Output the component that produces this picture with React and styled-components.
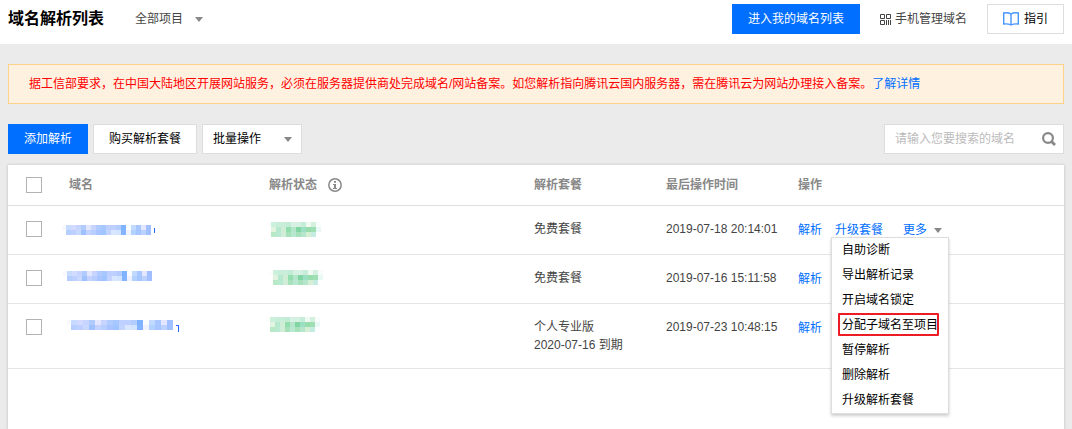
import React, { useState } from 'react';
import styled, { createGlobalStyle } from 'styled-components';

// Styling
const GlobalStyle = createGlobalStyle`
    * {
        box-sizing: border-box;
    }
    body {
        margin: 0;
        background: #ebebeb;
        color: #444;
        font: 12px/18px 'Liberation Sans', 'Noto Sans CJK SC', sans-serif;
    }
    button, input, select {
        font: inherit;
        border-radius: 0;
    }
`;

const Page = styled.div`
    display: flex;
    flex-direction: column;
    min-height: 100vh;
`;

const Header = styled.header`
    display: flex;
    align-items: center;
    justify-content: space-between;
    height: 44px;
    padding: 0 8px 6px;
    background: #fff;
`;

const HeaderGroup = styled.div`
    display: flex;
    align-items: center;
    gap: ${props => props.$gap};
`;

const Title = styled.h1`
    margin: 0;
    color: #000;
    font-size: 16px;
    line-height: 24px;
    font-weight: bold;
`;

const Main = styled.main`
    display: flex;
    flex-direction: column;
    flex: 1;
    padding: 20px 8px 0;
`;

const Button = styled.button`
    display: inline-flex;
    align-items: center;
    gap: 5px;
    height: 30px;
    padding: 0 15px;
    border: 1px solid ${props => props.$primary ? '#006eff' : '#ddd'};
    background: ${props => props.$primary ? '#006eff' : '#fff'};
    color: ${props => props.$primary ? '#fff' : '#000'};
    white-space: nowrap;
    cursor: pointer;
`;

const Link = styled.a`
    color: #006eff;
    text-decoration: none;
`;

const PhoneLink = styled(Link)`
    display: flex;
    align-items: center;
    gap: 4px;
    color: #444;
`;

const SelectWrapper = styled.div`
    display: grid;
    align-items: center;
    height: 30px;
    border: ${props => props.$bordered ? '1px solid #ddd' : 'none'};
    background: #fff;

    > * {
        grid-area: 1 / 1;
    }
    > svg {
        justify-self: end;
        margin-right: ${props => props.$bordered ? '9px' : '0'};
        pointer-events: none;
    }
`;

const Select = styled.select`
    appearance: none;
    width: ${props => props.$width};
    height: 28px;
    padding: 0 ${props => props.$inset};
    border: none;
    background: transparent;
    color: ${props => props.$inset === '0' ? '#444' : '#000'};
`;

const Notice = styled.div`
    padding: 10px 20px;
    border: 1px solid #ffd18b;
    background: #fff1e0;
    color: #f00;
`;

const Toolbar = styled.div`
    display: flex;
    gap: 5px;
    margin: 20px 0 10px;
`;

const SearchBox = styled.form`
    display: flex;
    align-items: center;
    width: 180px;
    height: 30px;
    margin-left: auto;
    padding: 0 7px 0 10px;
    border: 1px solid #ddd;
    background: #fff;
`;

const SearchInput = styled.input`
    flex: 1;
    min-width: 0;
    padding: 0;
    border: none;
    outline: none;
    background: transparent;

    &::placeholder {
        color: #bbb;
    }
`;

const IconButton = styled.button`
    display: flex;
    padding: 0;
    border: none;
    background: none;
`;

const Card = styled.section`
    flex: 1;
    border-top: 1px solid #ddd;
    background: #fff;
    box-shadow: 0 1px 3px rgba(0, 0, 0, 0.2);
`;

const Table = styled.table`
    width: 100%;
    table-layout: fixed;
    border-spacing: 0;
`;

const HeadCell = styled.th`
    width: ${props => props.$width};
    height: 41px;
    padding: 0 10px;
    border-bottom: 1px solid #ddd;
    color: #888;
    text-align: left;
    font-weight: bold;

    &:first-child {
        padding-left: 18px;
    }
`;

const HeadLabel = styled.span`
    display: flex;
    align-items: center;
    gap: 11px;
`;

const Cell = styled.td`
    padding: 14px 10px;
    border-bottom: 1px solid #e5e5e5;
    vertical-align: top;

    &:first-child {
        padding-left: 18px;
    }
`;

const Checkbox = styled.input`
    appearance: none;
    display: block;
    width: 16px;
    height: 16px;
    margin: 0;
    border: 1px solid #b2b2b2;
    background: #fff;

    ${Cell} > & {
        margin-top: 1px;
    }
    &:checked {
        background: #006eff;
    }
`;

const Mosaic = styled.svg`
    display: block;
    overflow: visible;
`;

const Actions = styled.div`
    display: flex;
    gap: 13px;
    line-height: 20px;
`;

const MoreWrapper = styled.div`
    position: relative;
    margin-left: 7px;
`;

const MoreButton = styled.button`
    display: flex;
    align-items: center;
    gap: 7px;
    height: 20px;
    padding: 0;
    border: none;
    background: none;
    color: #006eff;
    cursor: pointer;
`;

const Menu = styled.ul`
    position: absolute;
    top: 17px;
    right: -7px;
    width: 118px;
    margin: 0;
    padding: 0;
    border: 1px solid #ddd;
    background: #fff;
    box-shadow: 0 2px 3px rgba(0, 0, 0, 0.2);
    list-style: none;
    z-index: 1;
`;

const MenuItem = styled.button`
    position: relative;
    display: block;
    width: 100%;
    height: 25px;
    padding: 0 10px 2px;
    border: none;
    background: none;
    color: #000;
    text-align: left;
    white-space: nowrap;
`;

// Red frame around the marked menu entry
const Marker = styled.span`
    position: absolute;
    inset: 0 9px 2px 6px;
    border: 2px solid #ed1c24;
    border-radius: 1px;
`;

// Icons
const Caret = () => (
    <svg width="8" height="5" viewBox="0 0 8 5" aria-hidden="true">
        <path d="M0 0h8L4 5z" fill="#888" />
    </svg>
);

const QrIcon = () => (
    <svg width="11" height="11" viewBox="0 0 11 11" fill="none" stroke="#444" aria-hidden="true">
        <path d="M.5.5h4v4h-4zM6.5.5h4v4h-4zM.5 6.5h4v4h-4zM6.5 6v5M8.5 6v5M10.5 6v5" />
    </svg>
);

const BookIcon = () => (
    <svg width="16" height="14" viewBox="0 0 16 14" fill="none" stroke="#4596ff" aria-hidden="true">
        <path d="M8 2C6 .7 3.500.6.7 1v11c2.500-.3 5-.2 7.300 1 2.300-1.200 4.800-1.300 7.300-1V1C12.500.6 10 .7 8 2z" strokeWidth="1.400" />
        <path d="M8 2v11" strokeWidth="1.400" />
    </svg>
);

const InfoIcon = () => (
    <svg width="14" height="14" viewBox="0 0 14 14" fill="none" stroke="#888" aria-hidden="true">
        <circle cx="7" cy="7" r="6.200" strokeWidth="1.500" />
        <path d="M6 3h2v1.800H6zM5 6h3v4h1v1H5v-1h1V7H5z" fill="#888" stroke="none" />
    </svg>
);

const SearchIcon = () => (
    <svg width="14" height="14" viewBox="0 0 14 14" fill="none" stroke="#888" aria-hidden="true">
        <circle cx="6" cy="6" r="4.900" strokeWidth="2.200" />
        <path d="M9 9l4 4" strokeWidth="2.800" />
    </svg>
);

// Blurred domain names and statuses
const BLUE = [
    'c6dbff d2dbff c6d4ff b0ccff e3e6ff c6d4ff b0ccff a6c8ff bdd0ff bdd0ff b3ccff 80b3ff f9fdff c1daff a8c6ff e3e6ff a1beff',
    'b5cdff bdd0ff c8d8ff 9fc2ff c3d2ff b8ceff a9c4ff 9fc4ff c3d4ff d9e6ff d2e4ff 84b3ff f0f2ff b1d1ff a7c6ff bdd1ff a2bfff',
];
const GREEN = [
    'cbf0dc c8eeda c8eeda c3ecd5 d6f1e3 d6f1e3 c6edd7 f0f9f2 d4f1e0 f8fdfb',
    'e2f4e0 b6e8d0 d0edd6 92deae b5e5ca 80d5a2 9be0c4 99ddad a0dfb4 e9f9f5',
    'b8e9c7 bae9d2 d0edd8 a6e1bb b9e8d0 a6e1bb b5e6cc d4efd4 c4ece3 ffffff',
];

function Pixels({ rows, x, y, size, edge, tail, label }) {
    return (
        <Mosaic width="100" height="18" role="img" aria-label={label} shapeRendering="crispEdges">
            <rect x={x - 4} y={y} width="4" height="5" fill={edge} />
            {rows.map((row, i) => row.split(' ').map((color, j) => (
                <rect key={`${i}-${j}`} x={x + j * size} y={y + i * 5} width={size} height="5" fill={`#${color}`} />
            )))}
            {tail && <path d={tail} stroke="#2b66ff" fill="none" />}
        </Mosaic>
    );
}

const records = [
    {
        id: 1,
        domain: { x: -3, y: 5, size: 5, tail: 'M85.500 8v5' },
        status: { x: 2, y: 2 },
        plan: ['免费套餐'],
        time: '2019-07-18 20:14:01',
        open: true,
    },
    {
        id: 2,
        domain: { x: -2, y: 2, size: 5 },
        status: { x: 4, y: 1 },
        plan: ['免费套餐'],
        time: '2019-07-16 15:11:58',
    },
    {
        id: 3,
        domain: { x: 2, y: 2, size: 6, tail: 'M107 7.500h2.500V14' },
        status: { x: 1, y: -1 },
        plan: ['个人专业版', '2020-07-16 到期'],
        time: '2019-07-23 10:48:15',
    },
];

const menuItems = ['自助诊断', '导出解析记录', '开启域名锁定', '分配子域名至项目', '暂停解析', '删除解析', '升级解析套餐'];

function MoreMenu() {
    const [open, setOpen] = useState(true);
    return (
        <MoreWrapper>
            <MoreButton type="button" aria-expanded={open} onClick={() => setOpen(!open)}>
                更多<Caret />
            </MoreButton>
            {open && (
                <Menu>
                    {menuItems.map(item => (
                        <li key={item}>
                            <MenuItem type="button">
                                {item}
                                {item === '分配子域名至项目' && <Marker />}
                            </MenuItem>
                        </li>
                    ))}
                </Menu>
            )}
        </MoreWrapper>
    );
}

function RecordRow({ record }) {
    const { domain, status, plan, time, open } = record;
    return (
        <tr>
            <Cell><Checkbox type="checkbox" aria-label="选择域名" /></Cell>
            <Cell><Pixels rows={BLUE} edge="#f8f9ff" label="域名" {...domain} /></Cell>
            <Cell><Pixels rows={GREEN} size={5} edge="#fdfdfb" label="解析状态" {...status} /></Cell>
            <Cell>{plan.map(line => <div key={line}>{line}</div>)}</Cell>
            <Cell>{time}</Cell>
            <Cell>
                <Actions>
                    <Link href="#resolve">解析</Link>
                    {open && <Link href="#upgrade">升级套餐</Link>}
                    {open && <MoreMenu />}
                </Actions>
            </Cell>
        </tr>
    );
}

export default function App() {
    return (
        <Page>
            <GlobalStyle />
            <Header>
                <HeaderGroup $gap="31px">
                    <Title>域名解析列表</Title>
                    <SelectWrapper>
                        <Select $width="68px" $inset="0" aria-label="项目">
                            <option>全部项目</option>
                        </Select>
                        <Caret />
                    </SelectWrapper>
                </HeaderGroup>
                <HeaderGroup $gap="20px">
                    <Button type="button" $primary>进入我的域名列表</Button>
                    <PhoneLink href="#phone"><QrIcon />手机管理域名</PhoneLink>
                    <Button type="button"><BookIcon />指引</Button>
                </HeaderGroup>
            </Header>
            <Main>
                <Notice>
                    据工信部要求，在中国大陆地区开展网站服务，必须在服务器提供商处完成域名/网站备案。如您解析指向腾讯云国内服务器，需在腾讯云为网站办理接入备案。<Link href="#detail">了解详情</Link>
                </Notice>
                <Toolbar>
                    <Button type="button" $primary>添加解析</Button>
                    <Button type="button">购买解析套餐</Button>
                    <SelectWrapper $bordered>
                        <Select $width="98px" $inset="10px" aria-label="批量操作">
                            <option>批量操作</option>
                        </Select>
                        <Caret />
                    </SelectWrapper>
                    <SearchBox>
                        <SearchInput type="text" aria-label="搜索域名" placeholder="请输入您要搜索的域名" />
                        <IconButton type="button" aria-label="搜索"><SearchIcon /></IconButton>
                    </SearchBox>
                </Toolbar>
                <Card>
                    <Table>
                        <thead>
                            <tr>
                                <HeadCell $width="51px"><Checkbox type="checkbox" aria-label="全选" /></HeadCell>
                                <HeadCell $width="200px">域名</HeadCell>
                                <HeadCell $width="265px"><HeadLabel>解析状态<InfoIcon /></HeadLabel></HeadCell>
                                <HeadCell $width="132px">解析套餐</HeadCell>
                                <HeadCell $width="132px">最后操作时间</HeadCell>
                                <HeadCell>操作</HeadCell>
                            </tr>
                        </thead>
                        <tbody>
                            {records.map(record => <RecordRow key={record.id} record={record} />)}
                        </tbody>
                    </Table>
                </Card>
            </Main>
        </Page>
    );
}
